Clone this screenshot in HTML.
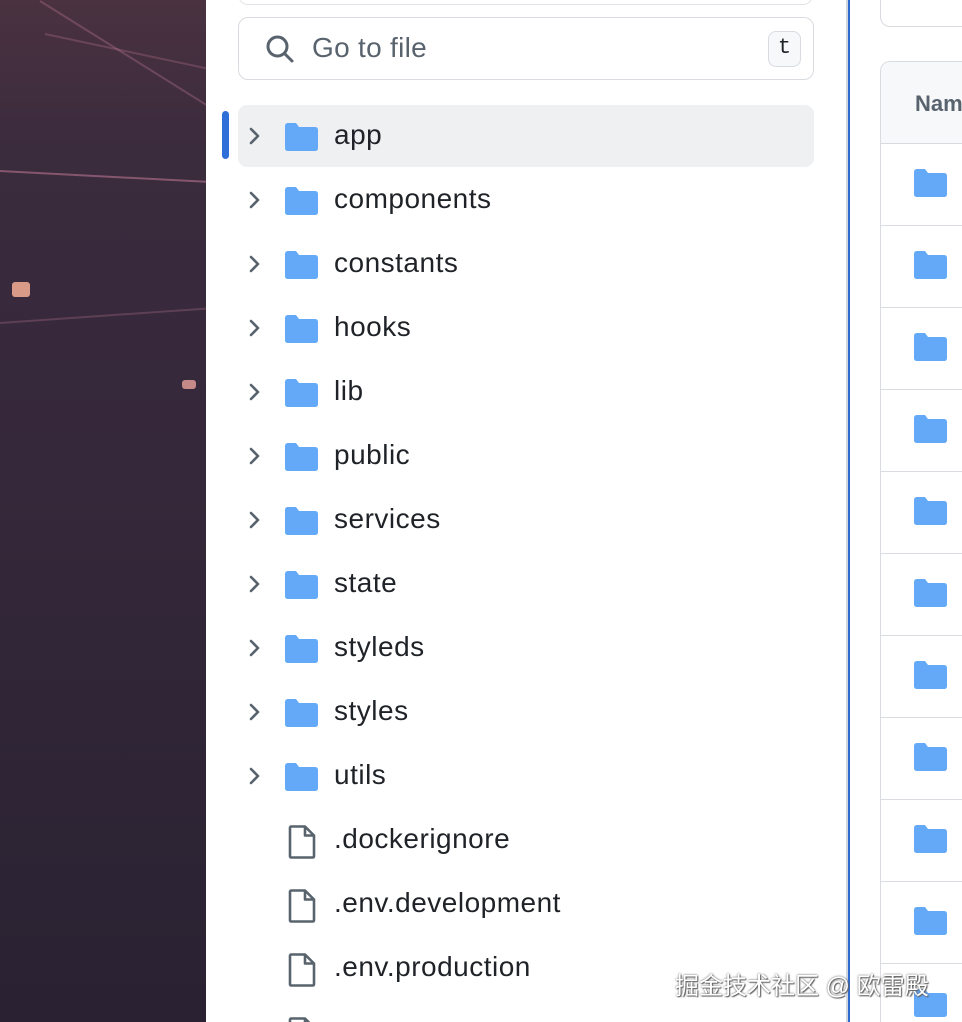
<!DOCTYPE html>
<html><head><meta charset="utf-8"><style>
*{margin:0;padding:0;box-sizing:border-box}
html,body{width:962px;height:1022px;overflow:hidden}
body{position:relative;font-family:"Liberation Sans","Noto Sans CJK SC",sans-serif;background:#fff}
.bg{position:absolute;left:0;top:0;width:206px;height:1022px;background:linear-gradient(180deg,#4a3240 0%,#3a2b3d 15%,#35283a 45%,#2f2536 70%,#2a2232 100%);overflow:hidden}
.streak{position:absolute;height:2px;background:rgba(210,130,160,.5);transform-origin:left center}
.panel{position:absolute;left:206px;top:0;width:642px;height:1022px;background:#fff}
.topbox{position:absolute;left:238px;top:-20px;width:575px;height:25px;border:1.5px solid #e1e4e8;border-radius:10px}
.search{position:absolute;left:238px;top:17px;width:576px;height:63px;border:1.5px solid #d8dce0;border-radius:10px}
.search .ph{position:absolute;left:73px;top:14px;font-size:28px;letter-spacing:0.3px;color:#59636e}
.kbd{position:absolute;left:529px;top:13px;width:33px;height:36px;border:1.5px solid #d8dce0;border-radius:8px;background:#f6f8fa;font-family:"Liberation Mono",monospace;font-size:22px;text-align:center;line-height:32px;color:#1f2328}
.row{position:absolute;left:238px;width:576px;height:62px}
.row.sel{background:#eef0f2;border-radius:9px}
.row .name{position:absolute;left:96px;top:14px;font-size:28px;letter-spacing:0.5px;color:#1f2328;white-space:nowrap}
.chev{position:absolute;left:8px;top:20px}
.fold{position:absolute;left:47px;top:18px}
.file{position:absolute;left:50px;top:16px}
.ind{position:absolute;left:222px;top:111px;width:7px;height:48px;background:#2f6fd8;border-radius:4px}
.vline{position:absolute;left:846px;top:0;width:2px;height:1022px;background:#d0d7de}
.vblue{position:absolute;left:848px;top:0;width:2px;height:1022px;background:#3069cf}
.rtop{position:absolute;left:880px;top:-20px;width:120px;height:47px;border:1.5px solid #d8dce0;border-radius:10px}
.table{position:absolute;left:880px;top:61px;width:120px;height:961px;border:1.5px solid #d8dce0;border-bottom:none;border-radius:10px 0 0 0;overflow:hidden}
.thead{height:82px;background:#f6f8fa;border-bottom:1.5px solid #d8dce0;font-weight:bold;font-size:22px;color:#59636e;padding:29px 0 0 34px}
.trow{height:82px;border-bottom:1.5px solid #d8dce0;position:relative}
.trow svg{position:absolute;left:33px;top:25px}
.wm{position:absolute;left:675px;top:966px;font-size:24px;color:#fff;text-shadow:0 0 2px #555,1px 1px 1px #666}
</style></head><body>
<div class="bg">
<div class="streak" style="left:40px;top:0;width:220px;transform:rotate(32deg);opacity:.6"></div>
<div class="streak" style="left:45px;top:33px;width:170px;transform:rotate(12deg);opacity:.5"></div>
<div class="streak" style="left:0;top:170px;width:210px;transform:rotate(3deg)"></div>
<div class="streak" style="left:0;top:322px;width:210px;transform:rotate(-4deg);opacity:.5"></div>
<div style="position:absolute;left:12px;top:282px;width:18px;height:15px;background:#d99a88;border-radius:3px"></div>
<div style="position:absolute;left:182px;top:380px;width:14px;height:9px;background:#c58a88;border-radius:3px"></div>
</div>
<div class="panel"></div>
<div class="topbox"></div>
<div class="search">
<svg style="position:absolute;left:26px;top:16px" width="30" height="30" viewBox="0 0 30 30"><circle cx="12.5" cy="12.5" r="9.5" fill="none" stroke="#59636e" stroke-width="3"/><path d="M19.5 19.5L27 27" stroke="#59636e" stroke-width="3" stroke-linecap="round"/></svg>
<div class="ph">Go to file</div>
<div class="kbd">t</div>
</div>
<div class="ind"></div>
<div id="rows"></div>
<div class="vline"></div><div class="vblue"></div>
<div class="rtop"></div>
<div class="table"><div class="thead">Nam</div>
<div class="trow"></div><div class="trow"></div><div class="trow"></div><div class="trow"></div><div class="trow"></div><div class="trow"></div><div class="trow"></div><div class="trow"></div><div class="trow"></div><div class="trow"></div><div class="trow"></div>
</div>
<div class="wm">掘金技术社区 @ 欧雷殿</div>
<script>
var folders=["app","components","constants","hooks","lib","public","services","state","styleds","styles","utils"];
var files=[".dockerignore",".env.development",".env.production",""];
var fold='<svg class="fold" width="33" height="28" viewBox="0 0 33 28"><path d="M0 3Q0 0 3 0H11L14 4H30Q33 4 33 7V25Q33 28 30 28H3Q0 28 0 25Z" fill="#64a8f8"/></svg>';
var chev='<svg class="chev" width="18" height="22" viewBox="0 0 18 22"><path d="M5 4L12 11L5 18" fill="none" stroke="#59636e" stroke-width="2.6" stroke-linecap="round" stroke-linejoin="round"/></svg>';
var file='<svg class="file" width="28" height="34" viewBox="0 0 28 34"><path d="M3 1.5H17L26 10.5V31Q26 32.5 24.5 32.5H3.5Q2 32.5 2 31V3Q2 1.5 3.5 1.5ZM17 1.5V10.5H26" fill="none" stroke="#59636e" stroke-width="2.6" stroke-linejoin="round"/></svg>';
var h='';
folders.forEach(function(n,i){h+='<div class="row'+(i==0?' sel':'')+'" style="top:'+(105+i*64)+'px">'+chev+fold+'<div class="name">'+n+'</div></div>';});
files.forEach(function(n,i){h+='<div class="row" style="top:'+(105+(11+i)*64)+'px">'+file+'<div class="name">'+n+'</div></div>';});
document.getElementById('rows').innerHTML=h;
document.querySelectorAll('.trow').forEach(function(r){r.innerHTML='<svg width="33" height="28" viewBox="0 0 33 28"><path d="M0 3Q0 0 3 0H11L14 4H30Q33 4 33 7V25Q33 28 30 28H3Q0 28 0 25Z" fill="#64a8f8"/></svg>';});
</script>
</body></html>
